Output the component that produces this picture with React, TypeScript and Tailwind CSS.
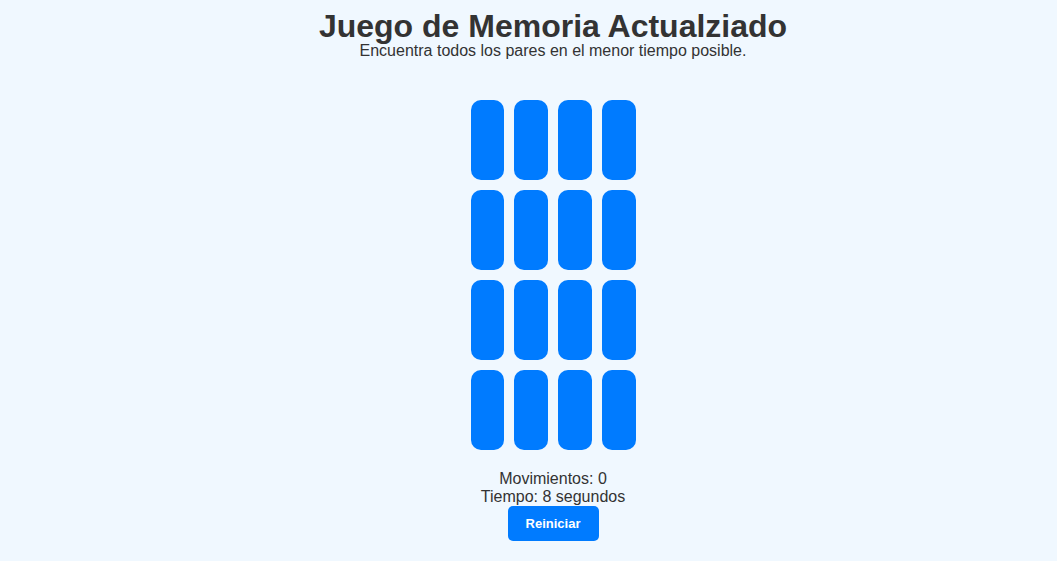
export default function App() {
  const cards = Array.from({ length: 16 }, (_, i) => i);

  return (
    <div className="min-h-[561px] bg-[#f0f8ff] pl-[49px] font-['Liberation_Sans',Arial,sans-serif] text-[#333]">
      <div className="flex flex-col items-center">
        <h1 className="mt-[8px] text-[32px] font-bold leading-[36px]">Juego de Memoria Actualziado</h1>
        <p className="mt-[-2px] text-[16px] leading-[18px]">Encuentra todos los pares en el menor tiempo posible.</p>

        <div className="mt-[40px] grid w-[165px] grid-cols-4 gap-[10px]">
          {cards.map((c) => (
            <div key={c} className="h-[80px] rounded-[10px] bg-[#007bff]" />
          ))}
        </div>

        <div className="mt-[20px] text-center text-[16px] leading-[18px]">
          <p>Movimientos: 0</p>
          <p>Tiempo: 8 segundos</p>
        </div>
        <button className="h-[35px] w-[91px] rounded-[5px] bg-[#007bff] text-[13px] font-bold text-white">
          Reiniciar
        </button>
      </div>
    </div>
  );
}
